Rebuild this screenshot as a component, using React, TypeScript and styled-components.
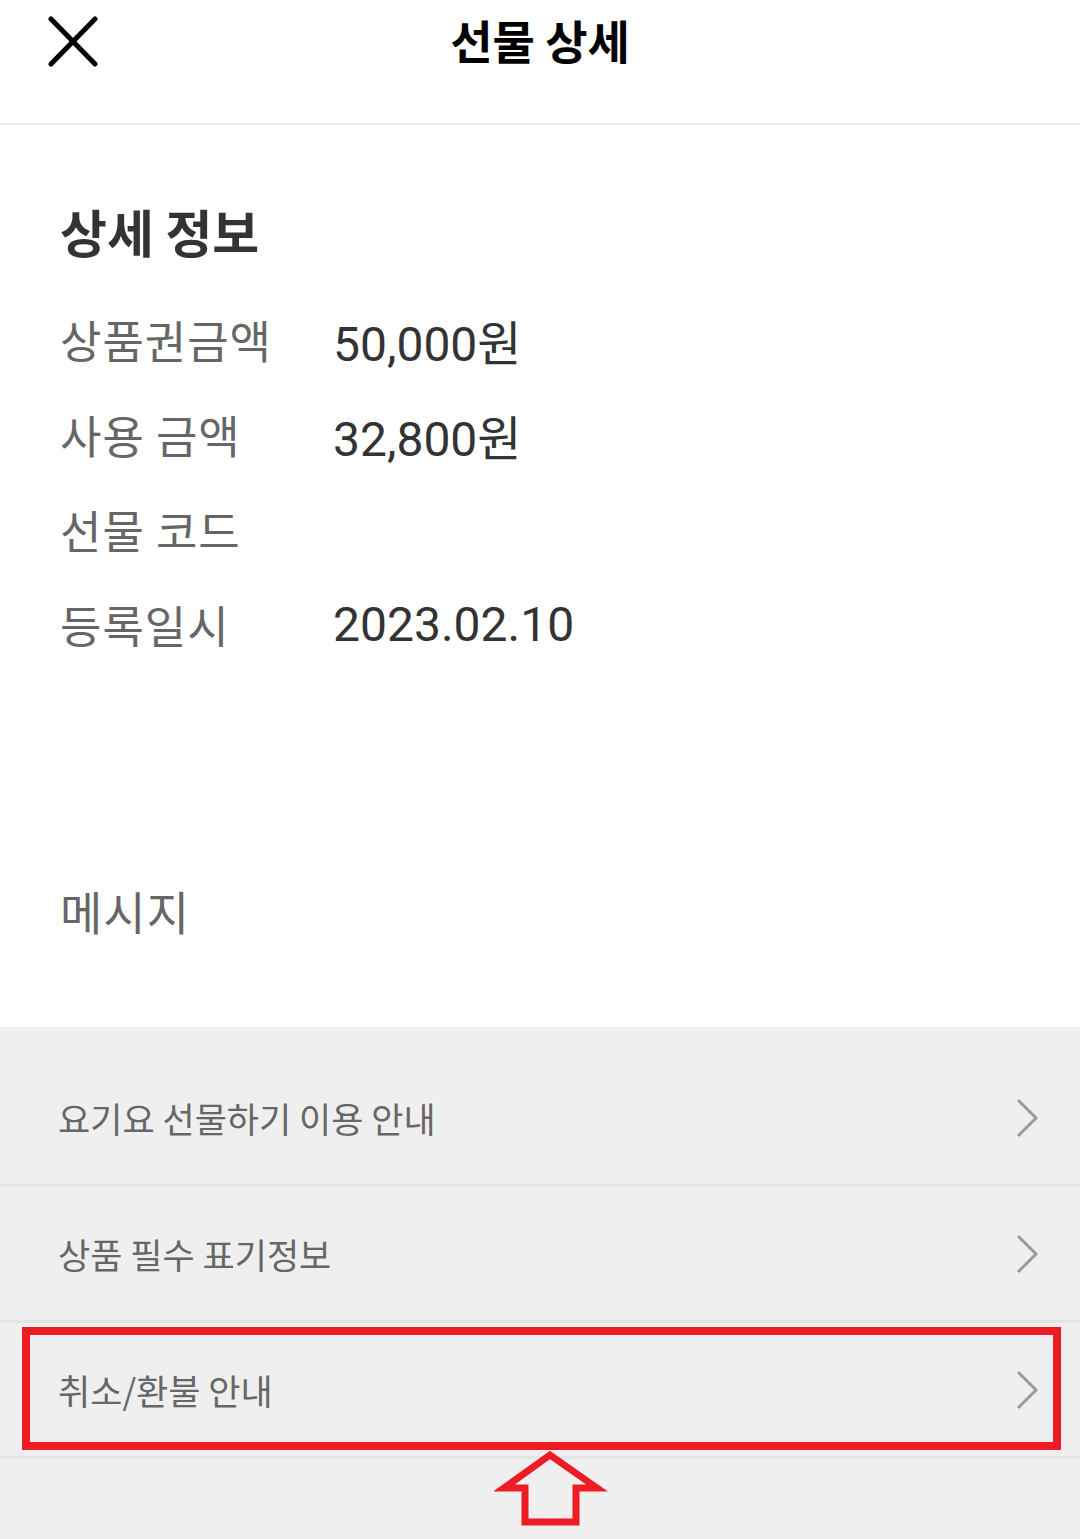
import React from "react";
import styled, { createGlobalStyle } from "styled-components";

const GlobalStyle = createGlobalStyle`
  html, body { margin: 0; padding: 0; background: #ffffff; }
  body { font-family: Roboto, "Noto Sans CJK KR", "Noto Sans", sans-serif; }
  * { box-sizing: border-box; }
`;

const Page = styled.div`
  position: relative;
  width: 1080px;
  min-height: 1539px;
  display: flex;
  flex-direction: column;
  background: #ffffff;
`;

const Header = styled.header`
  height: 125px;
  display: grid;
  grid-template-columns: 140px 1fr 140px;
  align-items: start;
  border-bottom: 2px solid #e8e8e8;
`;

const CloseButton = styled.button`
  margin: 16px 0 0 48px;
  width: 50px;
  height: 51px;
  padding: 0;
  border: none;
  background: none;
  display: flex;
`;

const Title = styled.h1`
  margin: 0;
  padding-top: 9px;
  text-align: center;
  font-size: 46px;
  line-height: 60px;
  font-weight: 700;
  color: #000;
  font-family: "Noto Sans CJK KR", sans-serif;
`;

const Info = styled.section`
  padding: 75px 0 0 60px;
  display: flex;
  flex-direction: column;
`;

const SectionTitle = styled.h2`
  margin: 0 0 30px;
  font-size: 51px;
  line-height: 62px;
  font-weight: 700;
  color: #333;
  font-family: "Noto Sans CJK KR", sans-serif;
`;

const Row = styled.div`
  display: grid;
  grid-template-columns: 273px 1fr;
  align-items: center;
  height: 95px;
`;

const Label = styled.span`
  font-family: "Noto Sans CJK KR", sans-serif;
  font-size: 45px;
  letter-spacing: 1px;
  color: #666;
`;

const Value = styled.span`
  font-family: Roboto, "Noto Sans CJK KR", sans-serif;
  font-size: 48px;
  color: #333;
`;

const Message = styled.div`
  margin: 207px 0 86px 60px;
  height: 62px;
  line-height: 62px;
  font-family: "Noto Sans CJK KR", sans-serif;
  font-size: 46px;
  letter-spacing: 1px;
  color: #666;
`;

const Menu = styled.nav`
  flex: 1;
  background: #efefef;
  padding-top: 24px;
  display: flex;
  flex-direction: column;
`;

const MenuItem = styled.div`
  height: 136px;
  padding: 0 40px 0 58px;
  border-bottom: 3px solid #e4e4e4;
  display: flex;
  align-items: center;
  justify-content: space-between;
`;

const MenuText = styled.span`
  font-family: "Noto Sans CJK KR", sans-serif;
  font-size: 35px;
  color: #666;
`;

const Highlight = styled.div`
  position: absolute;
  left: 22px;
  top: 1327px;
  width: 1039px;
  height: 123px;
  border: 8px solid #ed1c24;
  pointer-events: none;
`;

const ArrowMark = styled.svg`
  position: absolute;
  left: 494px;
  top: 1448px;
  pointer-events: none;
`;

const Chevron = () => (
  <svg width="24" height="40" viewBox="0 0 24 40">
    <polyline points="2,2 20,20 2,38" fill="none" stroke="#9a9a9a" strokeWidth="3" />
  </svg>
);

const rows = [
  { label: "상품권금액", value: "50,000원" },
  { label: "사용 금액", value: "32,800원" },
  { label: "선물 코드", value: "" },
  { label: "등록일시", value: "2023.02.10" },
];

const menu = ["요기요 선물하기 이용 안내", "상품 필수 표기정보", "취소/환불 안내"];

export default function App() {
  return (
    <>
      <GlobalStyle />
      <Page>
        <Header>
          <CloseButton aria-label="close">
            <svg width="50" height="51" viewBox="0 0 50 51">
              <line x1="3" y1="3" x2="47" y2="48" stroke="#000" strokeWidth="5" strokeLinecap="round" />
              <line x1="47" y1="3" x2="3" y2="48" stroke="#000" strokeWidth="5" strokeLinecap="round" />
            </svg>
          </CloseButton>
          <Title>선물 상세</Title>
          <div />
        </Header>
        <Info>
          <SectionTitle>상세 정보</SectionTitle>
          {rows.map((r) => (
            <Row key={r.label}>
              <Label>{r.label}</Label>
              <Value>{r.value}</Value>
            </Row>
          ))}
        </Info>
        <Message>메시지</Message>
        <Menu>
          {menu.map((m) => (
            <MenuItem key={m}>
              <MenuText>{m}</MenuText>
              <Chevron />
            </MenuItem>
          ))}
        </Menu>
        <Highlight />
        <ArrowMark width="114" height="82" viewBox="0 0 114 82">
          <polygon
            points="56,7 103,40 82,40 82,74 31,74 31,40 10,40"
            fill="none"
            stroke="#ed1c24"
            strokeWidth="7"
            strokeLinejoin="miter"
          />
        </ArrowMark>
      </Page>
    </>
  );
}
